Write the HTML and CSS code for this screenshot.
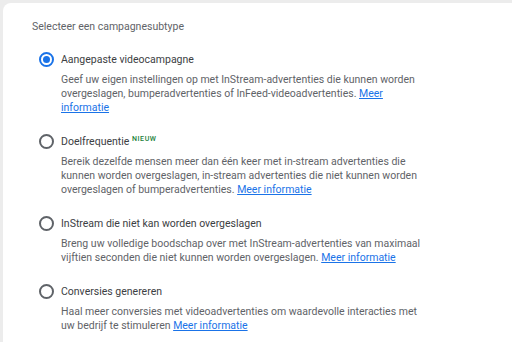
FILE: index.html
```html
<!DOCTYPE html>
<html lang="nl">
<head>
    <meta charset="UTF-8">
    <meta name="viewport" content="width=device-width, initial-scale=1.0">
    <title>Campagnesubtype</title>
    <link rel="stylesheet" href="styles.css">
</head>
<body>

    <div class="card">
        <div class="title">Selecteer een campagnesubtype</div>

        <!-- opties -->
        <div class="option">
            <span class="radio checked"></span>
            <div class="text">
                <div class="label">Aangepaste videocampagne</div>
                <div class="desc">Geef uw eigen instellingen op met InStream-advertenties die kunnen worden overgeslagen, bumperadvertenties of InFeed-videoadvertenties. <a href="#">Meer informatie</a></div>
            </div>
        </div>

        <div class="option">
            <span class="radio"></span>
            <div class="text">
                <div class="label">Doelfrequentie <sup class="new">NIEUW</sup></div>
                <div class="desc">Bereik dezelfde mensen meer dan één keer met in-stream advertenties die kunnen worden overgeslagen, in-stream advertenties die niet kunnen worden overgeslagen of bumperadvertenties. <a href="#">Meer informatie</a></div>
            </div>
        </div>

        <div class="option">
            <span class="radio"></span>
            <div class="text">
                <div class="label">InStream die niet kan worden overgeslagen</div>
                <div class="desc">Breng uw volledige boodschap over met InStream-advertenties van maximaal vijftien seconden die niet kunnen worden overgeslagen. <a href="#">Meer informatie</a></div>
            </div>
        </div>

        <div class="option">
            <span class="radio"></span>
            <div class="text">
                <div class="label">Conversies genereren</div>
                <div class="desc">Haal meer conversies met videoadvertenties om waardevolle interacties met uw bedrijf te stimuleren <a href="#">Meer informatie</a></div>
            </div>
        </div>
    </div>

</body>
</html>
```

FILE: styles.css
```css
body {
    margin: 0;
    background-color: #ececec;
    font-family: Roboto, "Liberation Sans", Arial, sans-serif;
    overflow: hidden;
}
.card {
    margin: 3px 0 0 3px;
    height: 400px;
    padding: 16px 0 0 29px;
    background-color: #fff;
    border-radius: 8px 0 0 0;
}
.title {
    font-size: 10.5px;
    line-height: 15px;
    color: #5f6368;
    margin-bottom: 17.5px;
}
.option {
    display: flex;
    margin-bottom: 18.5px;
}
.radio {
    flex: none;
    box-sizing: border-box;
    width: 15px;
    height: 15px;
    border: 2px solid #5f6368;
    border-radius: 50%;
    margin: 0 7px 0 7px;
    display: flex;
    align-items: center;
    justify-content: center;
}
.radio.checked {
    border-color: #1a73e8;
}
.radio.checked::after {
    content: "";
    width: 7px;
    height: 7px;
    border-radius: 50%;
    background-color: #1a73e8;
}
.text {
    width: 366px;
}
.label {
    font-size: 10.5px;
    line-height: 15px;
    color: #3c4043;
    margin-bottom: 6.5px;
}
.new {
    font-size: 7px;
    font-weight: 500;
    letter-spacing: 0.6px;
    color: #188038;
    vertical-align: 4px;
    line-height: 0;
}
.desc {
    font-size: 10.5px;
    line-height: 14px;
    color: #5f6368;
}
.desc a {
    color: #1a73e8;
}
```
